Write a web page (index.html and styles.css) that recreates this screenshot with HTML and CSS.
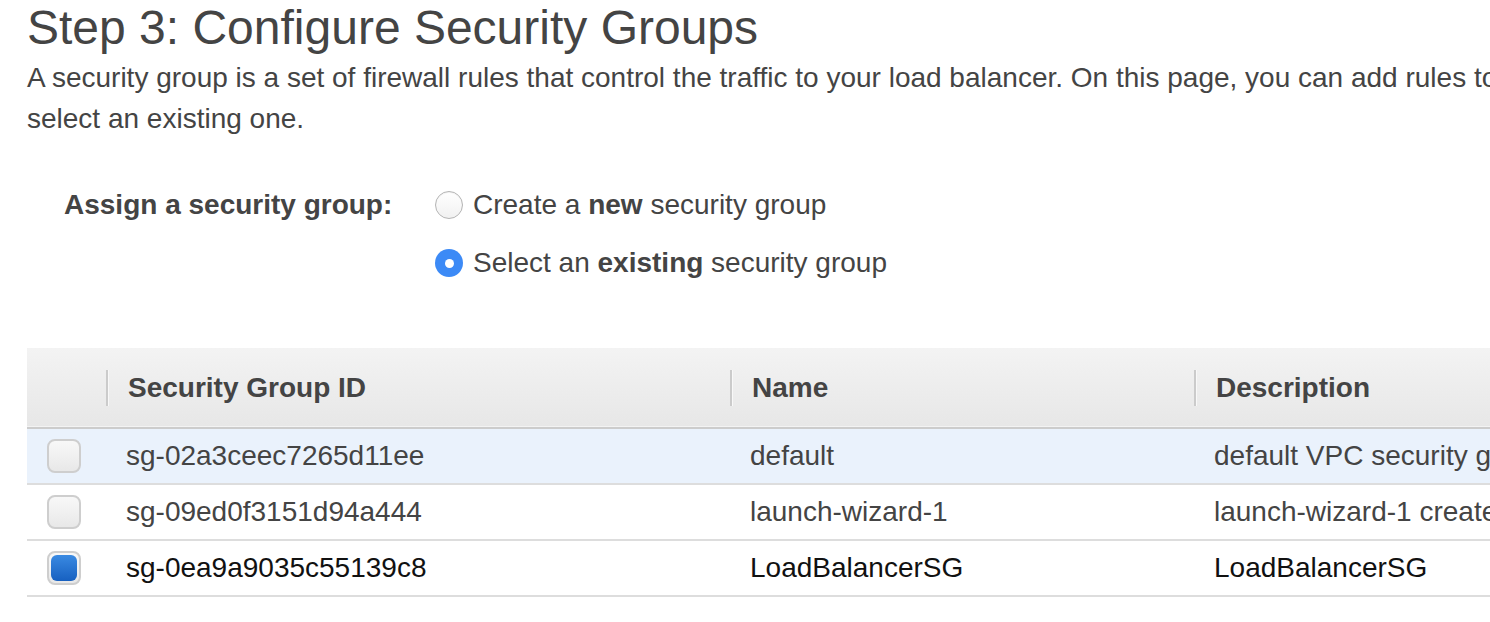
FILE: index.html
```html
<!DOCTYPE html>
<html lang="en">
<head>
<meta charset="utf-8">
<title>Step 3: Configure Security Groups</title>
<link rel="stylesheet" href="styles.css">
</head>
<body>
<main class="page">
  <h1 class="title">Step 3: Configure Security Groups</h1>
  <p class="intro">A security group is a set of firewall rules that control the traffic to your load balancer. On this page, you can add rules to allow specific traffic to reach your load balancer. First, decide whether to create a new security group or<br>select an existing one.</p>

  <div class="assign">
    <div class="assign-label">Assign a security group:</div>
    <div class="assign-options">
      <label class="option">
        <span class="radio"></span>
        <span>Create a <b>new</b> security group</span>
      </label>
      <label class="option">
        <span class="radio radio-on"><span class="radio-dot"></span></span>
        <span>Select an <b>existing</b> security group</span>
      </label>
    </div>
  </div>

  <table class="sg-table">
    <colgroup>
      <col class="c-check">
      <col class="c-id">
      <col class="c-name">
      <col class="c-desc">
    </colgroup>
    <thead>
      <tr>
        <th></th>
        <th><div class="th-inner">Security Group ID</div></th>
        <th><div class="th-inner">Name</div></th>
        <th><div class="th-inner">Description</div></th>
      </tr>
    </thead>
    <tbody>
      <tr class="row-hover">
        <td class="cell-check"><span class="checkbox"></span></td>
        <td>sg-02a3ceec7265d11ee</td>
        <td>default</td>
        <td>default VPC security group</td>
      </tr>
      <tr>
        <td class="cell-check"><span class="checkbox"></span></td>
        <td>sg-09ed0f3151d94a444</td>
        <td>launch-wizard-1</td>
        <td>launch-wizard-1 created 2019-10-01T10:12:44.123+00:00</td>
      </tr>
      <tr class="row-selected">
        <td class="cell-check"><span class="checkbox checkbox-on"><span class="checkbox-fill"></span></span></td>
        <td>sg-0ea9a9035c55139c8</td>
        <td>LoadBalancerSG</td>
        <td>LoadBalancerSG</td>
      </tr>
    </tbody>
  </table>
</main>
</body>
</html>
```

FILE: styles.css
```css
html, body {
  margin: 0;
  padding: 0;
  background: #ffffff;
  overflow: hidden;
}

body {
  font-family: "Liberation Sans", Arial, Helvetica, sans-serif;
  color: #444444;
}

.page {
  width: 2800px;
  padding-left: 27px;
}

.title {
  margin: 0;
  font-size: 48px;
  font-weight: normal;
  line-height: 56px;
  color: #444444;
}

.intro {
  margin: 1px 0 0 0;
  font-size: 28px;
  line-height: 41px;
  white-space: nowrap;
}

.assign {
  display: flex;
  margin-top: 37px;
  padding-left: 37px;
  font-size: 28px;
}

.assign-label {
  width: 371px;
  font-weight: bold;
  line-height: 58px;
}

.assign-options {
  display: flex;
  flex-direction: column;
}

.option {
  display: flex;
  align-items: center;
  gap: 10px;
  height: 58px;
  line-height: 58px;
}

.option b {
  font-weight: bold;
}

.radio {
  box-sizing: border-box;
  width: 28px;
  height: 28px;
  border-radius: 50%;
  border: 1px solid #b4b4b4;
  background: linear-gradient(#ffffff, #f1f1f1);
  box-shadow: inset 0 1px 1px rgba(0, 0, 0, 0.05);
  display: flex;
  align-items: center;
  justify-content: center;
  flex: none;
}

.radio-on {
  border: none;
  background: #3c8af6;
  box-shadow: none;
}

.radio-dot {
  width: 9px;
  height: 9px;
  border-radius: 50%;
  background: #ffffff;
}

.sg-table {
  margin-top: 56px;
  border-collapse: collapse;
  table-layout: fixed;
  width: 2100px;
  font-size: 28px;
}

.c-check { width: 79px; }
.c-id { width: 624px; }
.c-name { width: 464px; }
.c-desc { width: 933px; }

.sg-table thead tr {
  height: 80px;
  background: linear-gradient(#f3f3f3, #e7e7e7);
  border-bottom: 2px solid #cccccc;
}

.sg-table th {
  padding: 0;
  text-align: left;
  font-weight: bold;
  color: #444444;
}

.th-inner {
  height: 36px;
  line-height: 36px;
  border-left: 2px solid #cbcbcb;
  box-shadow: inset 1px 0 0 #f8f8f8;
  padding-left: 20px;
  white-space: nowrap;
}

.sg-table tbody tr {
  height: 56px;
  border-bottom: 2px solid #dddddd;
}

.sg-table td {
  padding: 0 0 0 20px;
  white-space: nowrap;
  overflow: hidden;
  color: #444444;
}

.sg-table td.cell-check {
  padding-left: 20px;
}

.row-hover {
  background: #eaf2fc;
}

.row-selected td {
  color: #111111;
}

.checkbox {
  box-sizing: border-box;
  display: flex;
  align-items: center;
  justify-content: center;
  width: 34px;
  height: 34px;
  border: 2px solid #cecece;
  border-radius: 8px;
  background: linear-gradient(#f8f8f8, #e8e8e8);
}

.checkbox-fill {
  width: 26px;
  height: 26px;
  border-radius: 6px;
  background: linear-gradient(#3a8ae2, #1760c0);
}
```
